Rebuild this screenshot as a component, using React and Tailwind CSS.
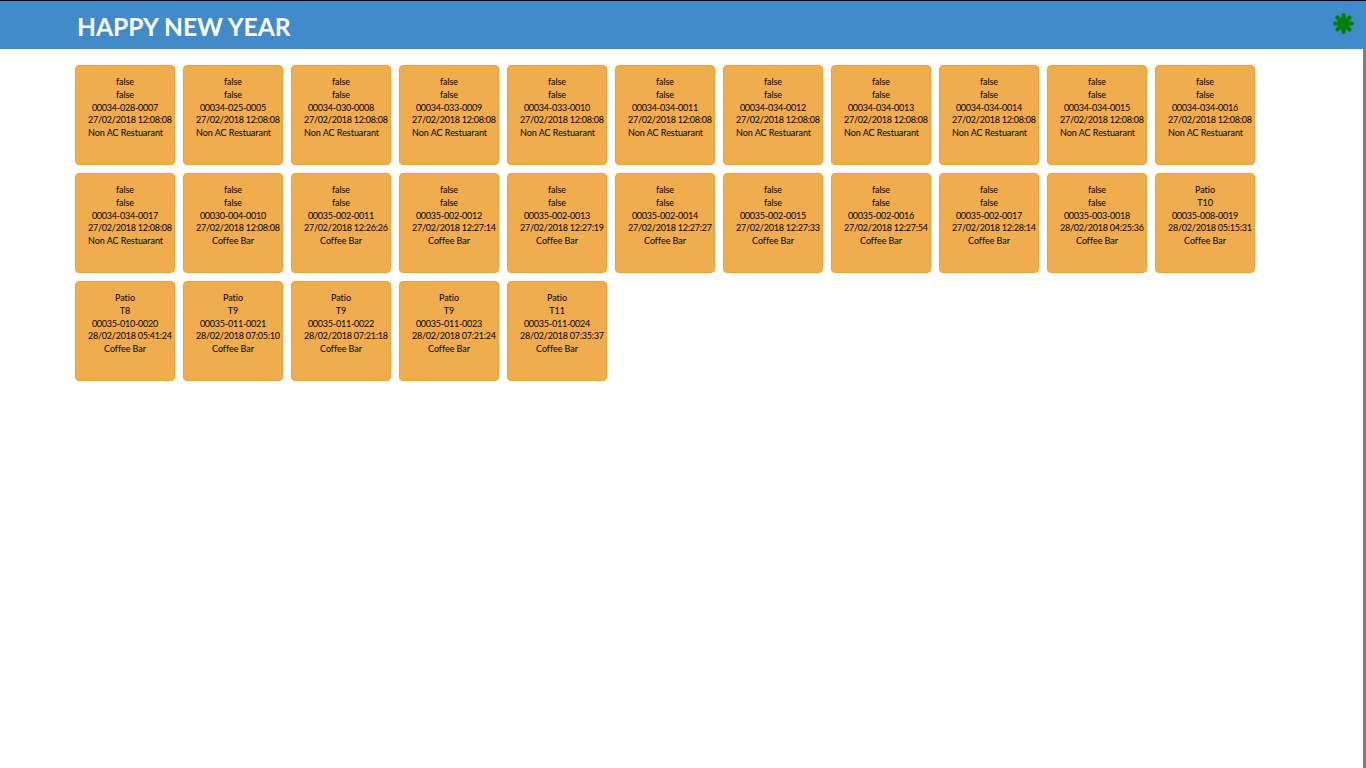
const t1 = "27/02/2018 12:08:08";
const rows = [
  ["false","false","00034-028-0007",t1,"Non AC Restuarant"],
  ["false","false","00034-025-0005",t1,"Non AC Restuarant"],
  ["false","false","00034-030-0008",t1,"Non AC Restuarant"],
  ["false","false","00034-033-0009",t1,"Non AC Restuarant"],
  ["false","false","00034-033-0010",t1,"Non AC Restuarant"],
  ["false","false","00034-034-0011",t1,"Non AC Restuarant"],
  ["false","false","00034-034-0012",t1,"Non AC Restuarant"],
  ["false","false","00034-034-0013",t1,"Non AC Restuarant"],
  ["false","false","00034-034-0014",t1,"Non AC Restuarant"],
  ["false","false","00034-034-0015",t1,"Non AC Restuarant"],
  ["false","false","00034-034-0016",t1,"Non AC Restuarant"],
  ["false","false","00034-034-0017",t1,"Non AC Restuarant"],
  ["false","false","00030-004-0010",t1,"Coffee Bar"],
  ["false","false","00035-002-0011","27/02/2018 12:26:26","Coffee Bar"],
  ["false","false","00035-002-0012","27/02/2018 12:27:14","Coffee Bar"],
  ["false","false","00035-002-0013","27/02/2018 12:27:19","Coffee Bar"],
  ["false","false","00035-002-0014","27/02/2018 12:27:27","Coffee Bar"],
  ["false","false","00035-002-0015","27/02/2018 12:27:33","Coffee Bar"],
  ["false","false","00035-002-0016","27/02/2018 12:27:54","Coffee Bar"],
  ["false","false","00035-002-0017","27/02/2018 12:28:14","Coffee Bar"],
  ["false","false","00035-003-0018","28/02/2018 04:25:36","Coffee Bar"],
  ["Patio","T10","00035-008-0019","28/02/2018 05:15:31","Coffee Bar"],
  ["Patio","T8","00035-010-0020","28/02/2018 05:41:24","Coffee Bar"],
  ["Patio","T9","00035-011-0021","28/02/2018 07:05:10","Coffee Bar"],
  ["Patio","T9","00035-011-0022","28/02/2018 07:21:18","Coffee Bar"],
  ["Patio","T9","00035-011-0023","28/02/2018 07:21:24","Coffee Bar"],
  ["Patio","T11","00035-011-0024","28/02/2018 07:35:37","Coffee Bar"],
];

function Card({ lines }) {
  return (
    <div className="w-[100px] h-[100px] bg-[#f0ad4e] border border-[#eea236] rounded-[4px] pt-[10px] px-[12px] text-[9px] leading-[12.8px] text-black text-center whitespace-nowrap">
      {lines.map((l, i) => (
        <div key={i} className={i === 2 || i === 3 ? "tracking-[-0.22px]" : "tracking-[-0.04px]"}>{l}</div>
      ))}
    </div>
  );
}

export default function App() {
  return (
    <div className="h-screen flex flex-col overflow-hidden bg-white font-['Lato',sans-serif]">
      <header className="h-[49px] shrink-0 border-t border-black bg-[#428bca] flex items-center justify-between pl-[77px] pr-[12px]">
        <h1 className="text-[24.6px] font-bold text-white leading-none mt-[4px]">HAPPY NEW YEAR</h1>
        <svg width="21" height="21" viewBox="0 0 21 21" className="mb-[3px]">
          <circle cx="10.5" cy="10.5" r="6" fill="#008000" />
          <g stroke="#008000" strokeWidth="4.2" strokeLinecap="round">
            <line x1="10.5" y1="2.1" x2="10.5" y2="18.9" />
            <line x1="2.1" y1="10.5" x2="18.9" y2="10.5" />
            <line x1="4.4" y1="4.4" x2="16.6" y2="16.6" />
            <line x1="16.6" y1="4.4" x2="4.4" y2="16.6" />
          </g>
        </svg>
      </header>
      <div className="flex-1 flex">
        <main className="flex-1 pl-[75px] pt-4">
          <div className="w-[1188px] flex flex-wrap gap-2">
            {rows.map((r, i) => (
              <Card key={i} lines={r} />
            ))}
          </div>
        </main>
        <div className="w-[3px] bg-[#7f7f7f]" />
      </div>
    </div>
  );
}
